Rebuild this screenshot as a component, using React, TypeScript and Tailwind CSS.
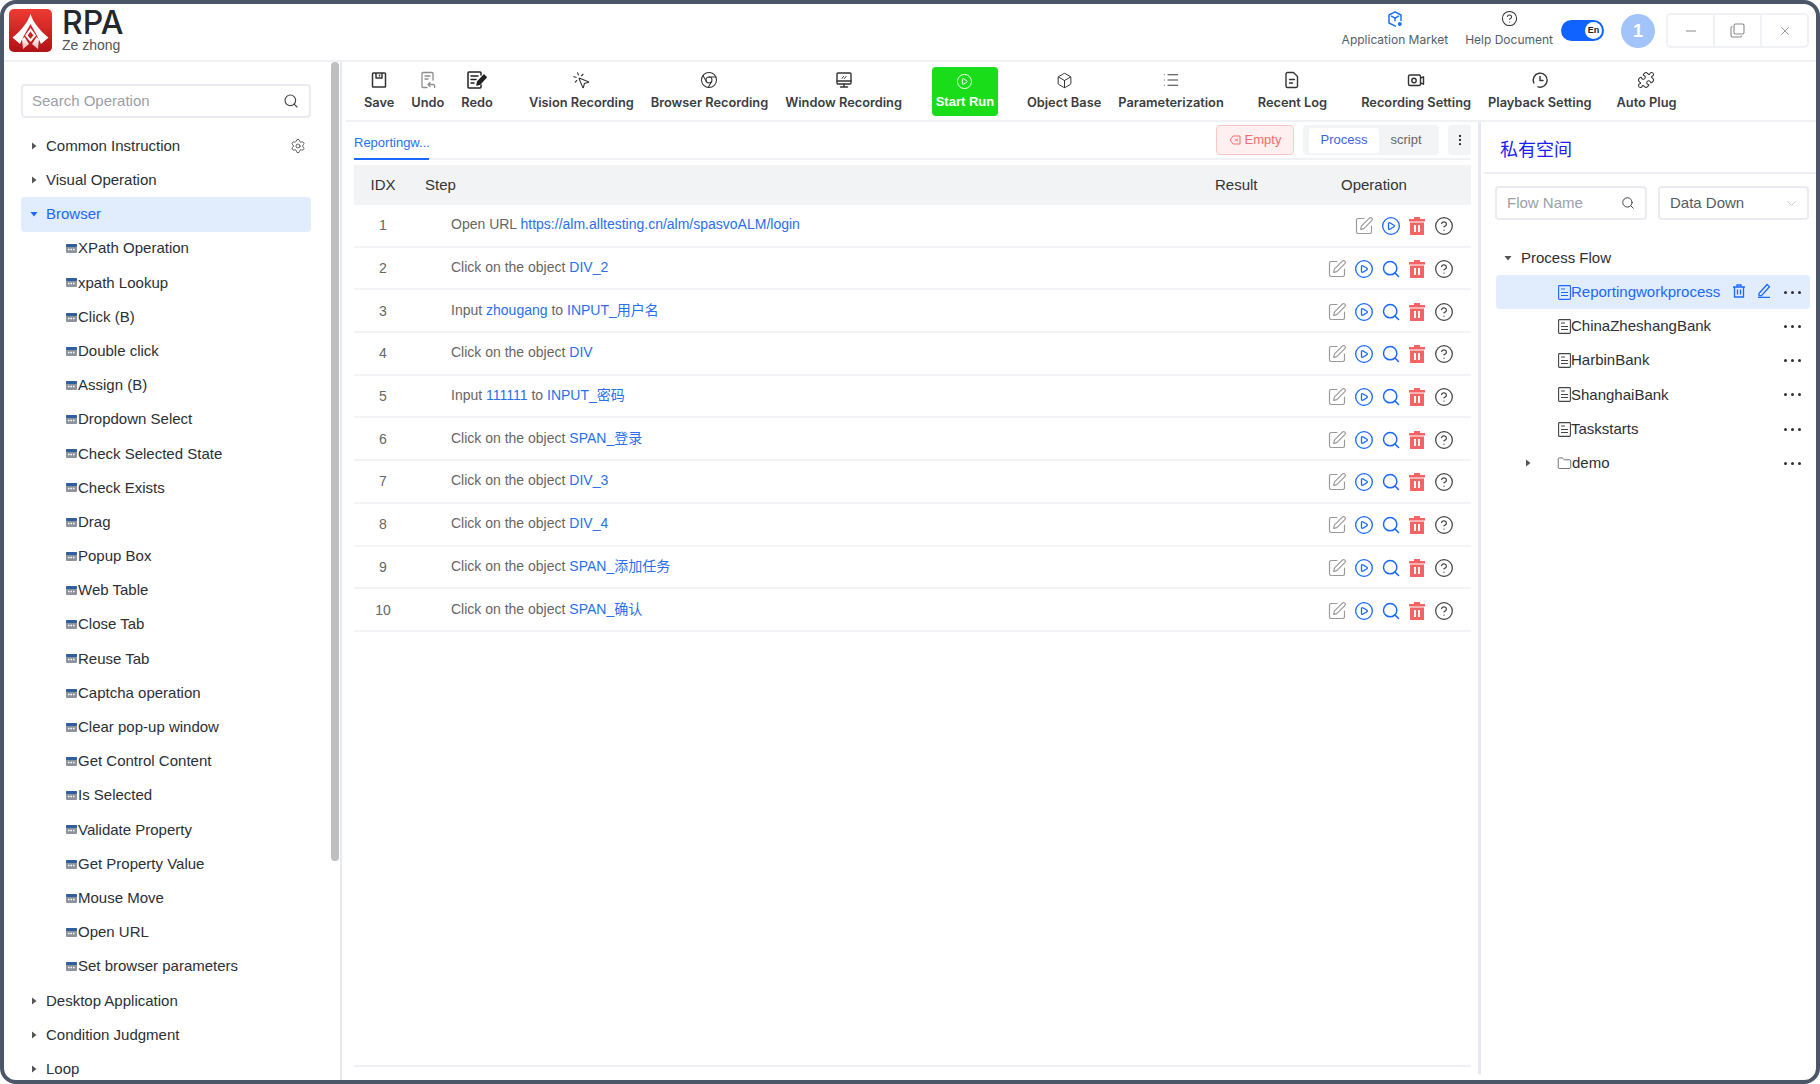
import { Box, ChevronDown, Chrome, CirclePlay, CircleHelp, EllipsisVertical, Folder, List, Minus, MousePointerClick, Puzzle, Search, Settings, SquarePen, X } from 'lucide-react';

const browserItems = [
  'XPath Operation', 'xpath Lookup', 'Click (B)', 'Double click', 'Assign (B)', 'Dropdown Select', 'Check Selected State',
  'Check Exists', 'Drag', 'Popup Box', 'Web Table', 'Close Tab', 'Reuse Tab', 'Captcha operation', 'Clear pop-up window',
  'Get Control Content', 'Is Selected', 'Validate Property', 'Get Property Value', 'Mouse Move', 'Open URL', 'Set browser parameters',
];

const steps: { pre: string; link: string; mid?: string; link2?: string }[] = [
  { pre: 'Open URL', link: 'https://alm.alltesting.cn/alm/spasvoALM/login' },
  { pre: 'Click on the object', link: 'DIV_2' },
  { pre: 'Input', link: 'zhougang', mid: 'to', link2: 'INPUT_用户名' },
  { pre: 'Click on the object', link: 'DIV' },
  { pre: 'Input', link: '111111', mid: 'to', link2: 'INPUT_密码' },
  { pre: 'Click on the object', link: 'SPAN_登录' },
  { pre: 'Click on the object', link: 'DIV_3' },
  { pre: 'Click on the object', link: 'DIV_4' },
  { pre: 'Click on the object', link: 'SPAN_添加任务' },
  { pre: 'Click on the object', link: 'SPAN_确认' },
];

const flows = ['ChinaZheshangBank', 'HarbinBank', 'ShanghaiBank', 'Taskstarts'];

function Logo() {
  return (
    <svg width="43" height="43" viewBox="0 0 43 43" className="shrink-0">
      <defs>
        <linearGradient id="logoBg" x1="0" y1="0" x2="0" y2="1">
          <stop offset="0" stopColor="#ee3b32" />
          <stop offset="1" stopColor="#b01218" />
        </linearGradient>
        <linearGradient id="logoLeg" x1="0" y1="0" x2="0" y2="1">
          <stop offset="0" stopColor="#ffffff" />
          <stop offset="1" stopColor="#f3b5b0" />
        </linearGradient>
      </defs>
      <rect width="43" height="43" rx="5" fill="url(#logoBg)" />
      <path d="M21.5 5C19 13 12 22 3.5 28.5L11 35C14 28 18 21 21.5 15C25 21 29 28 32 35L39.5 28.5C31 22 24 13 21.5 5Z" fill="#fff" />
      <path d="M21.5 19L27 26.5L21.5 33L16 26.5Z" fill="#fff" />
      <path d="M21.5 22.5L24.4 26.5L21.5 29.8L18.6 26.5Z" fill="#c9201f" />
      <path d="M13 30L15.5 28L20 35L14 40Z" fill="url(#logoLeg)" />
      <path d="M30 30L27.5 28L23 35L29 40Z" fill="url(#logoLeg)" />
    </svg>
  );
}

function SaveIcon() {
  return (
    <svg width="20" height="20" viewBox="0 0 20 20" fill="none" stroke="#333" strokeWidth="1.5" strokeLinejoin="round">
      <path d="M4.500 3h11a1 1 0 0 1 1 1v12.500a.5.5 0 0 1-.5.5H4a.5.5 0 0 1-.5-.5V4a1 1 0 0 1 1-1Z" />
      <path d="M7 3v5h6V3" />
      <path d="M10.500 4.500v2" />
    </svg>
  );
}

function UndoIcon() {
  return (
    <svg width="20" height="20" viewBox="0 0 20 20" fill="none" stroke="#8c8c8c" strokeWidth="1.3" strokeLinecap="round" strokeLinejoin="round">
      <path d="M9 17.500H5a1 1 0 0 1-1-1v-13a1 1 0 0 1 1-1h9a1 1 0 0 1 1 1V10" />
      <path d="M7 6h5M7 9h3" />
      <path d="M12 12.500l-2 2 2 2M10 14.500h5a2 2 0 0 1 1.500 3" />
    </svg>
  );
}

function RedoIcon() {
  return (
    <svg width="22" height="20" viewBox="0 0 22 20" fill="none" stroke="#222" strokeWidth="1.5" strokeLinecap="round" strokeLinejoin="round">
      <path d="M15 5V3a1 1 0 0 0-1-1H3a1 1 0 0 0-1 1v14a1 1 0 0 0 1 1h11a1 1 0 0 0 1-1v-2" />
      <path d="M5 6h7M5 9.500h5M5 13h3" />
      <path d="M11 15l.7-3.200L18 5l2.200 2.200-6.200 6.800Z" fill="#222" />
    </svg>
  );
}

function WindowRecIcon() {
  return (
    <svg width="20" height="20" viewBox="0 0 20 20" fill="none" stroke="#333" strokeWidth="1.4" strokeLinejoin="round" strokeLinecap="round">
      <rect x="3" y="3" width="14" height="11" rx="1" />
      <path d="M3 11h14M10 14v3M6.500 17h7" />
      <path d="M8 8.500l1.500-2M10.500 8.500l1.500-2" strokeWidth="1" />
    </svg>
  );
}

function LogIcon() {
  return (
    <svg width="20" height="20" viewBox="0 0 20 20" fill="none" stroke="#333" strokeWidth="1.4" strokeLinejoin="round" strokeLinecap="round">
      <path d="M5.500 2.500h6l4 4V16a1.500 1.500 0 0 1-1.500 1.500H5.500A1.500 1.500 0 0 1 4 16V4a1.500 1.500 0 0 1 1.500-1.500Z" />
      <path d="M7.500 9.500h5M7.500 13h3" />
    </svg>
  );
}

function VideoIcon() {
  return (
    <svg width="20" height="20" viewBox="0 0 20 20" fill="none" stroke="#333" strokeWidth="1.4" strokeLinejoin="round">
      <rect x="2.500" y="5" width="12" height="10.500" rx="1.500" />
      <circle cx="8" cy="10.500" r="2.200" />
      <path d="M14.500 8l3-1.200v7.400l-3-1.200" />
    </svg>
  );
}

function PlaybackIcon() {
  return (
    <svg width="20" height="20" viewBox="0 0 20 20" fill="none" stroke="#333" strokeWidth="1.4" strokeLinecap="round" strokeLinejoin="round">
      <path d="M3.800 13A7 7 0 1 1 8 16.800" />
      <path d="M10 6.500V10.500H13" />
    </svg>
  );
}

function MarketIcon() {
  return (
    <svg width="18" height="18" viewBox="0 0 18 18" fill="none" stroke="#1f6fff" strokeWidth="1.500" strokeLinejoin="round" strokeLinecap="round">
      <path d="M9 1.800l6 3.200v5.500M9.500 16.200L3 13V5l6-3.200" />
      <path d="M5.500 6.200L9 8.200l3.500-2" />
      <path d="M9 8.200v2.500" />
      <circle cx="13.800" cy="14" r="2" fill="#1f6fff" stroke="none" />
    </svg>
  );
}

function TrashIcon() {
  return (
    <svg width="18" height="20" viewBox="0 0 18 20">
      <path fill="#f56464" fillRule="evenodd" d="M6 1h6v2h5v2.500H1V3h5V1Zm-4 5.500h14V19H2V6.500Zm4 2.500v7h2V9H6Zm4 0v7h2V9h-2Z" />
    </svg>
  );
}

function DocIcon({ color }: { color: string }) {
  return (
    <svg width="13" height="15" viewBox="0 0 13 15" fill="none" stroke={color} strokeWidth="1.100" className="shrink-0">
      <rect x="0.600" y="0.600" width="11.800" height="13.800" rx="0.800" />
      <path d="M3 4h4M3 7.500h7M3 10.500h7" />
    </svg>
  );
}

function CmdIcon() {
  return (
    <svg width="11" height="9" viewBox="0 0 11 9" className="shrink-0">
      <rect width="11" height="9" rx="1" fill="#8d939c" />
      <rect width="11" height="3" rx="1" fill="#2f5f9e" />
      <path d="M2 5.500h7" stroke="#fff" strokeWidth="1.500" strokeDasharray="1.500 1" />
    </svg>
  );
}

function Caret({ open, color = '#555' }: { open?: boolean; color?: string }) {
  return (
    <svg width="8" height="8" viewBox="0 0 8 8" className="shrink-0">
      <path d={open ? 'M0.500 2h7L4 6.500Z' : 'M2 0.500v7L6.500 4Z'} fill={color} />
    </svg>
  );
}

function Dots() {
  return (
    <span className="ml-auto w-[17px] flex justify-between">
      <i className="w-[3px] h-[3px] rounded-full bg-[#2b2f36]" />
      <i className="w-[3px] h-[3px] rounded-full bg-[#2b2f36]" />
      <i className="w-[3px] h-[3px] rounded-full bg-[#2b2f36]" />
    </span>
  );
}

function ToolItem({ label, icon, className }: { label: string; icon: React.ReactNode; className: string }) {
  return (
    <div className={`flex flex-col items-center whitespace-nowrap ${className}`}>
      <div className="h-[20px] flex items-center justify-center">{icon}</div>
      <span className="mt-[5px] text-[12.8px] leading-[16px] font-semibold text-[#3a3d42] font-['Inter',sans-serif]">{label}</span>
    </div>
  );
}

function SideGroup({ label }: { label: string }) {
  return (
    <div className="h-[34.2px] flex items-center pl-[9px]">
      <Caret />
      <span className="ml-[8px]">{label}</span>
    </div>
  );
}

export default function App() {
  return (
    <div className="w-[1820px] h-[1084px] bg-white font-['Liberation_Sans','Noto_Sans_CJK_SC',sans-serif]">
      <div className="w-full h-full flex flex-col border-4 border-[#4b5768] rounded-[16px] overflow-hidden bg-white">
        {/* title bar */}
        <div className="h-[58px] shrink-0 flex items-start border-b-2 border-[#eff1f5] pl-[5px] pr-[7px]">
          <div className="mt-[5px]"><Logo /></div>
          <div className="ml-[10px] mt-[6px] flex flex-col">
            <span className="text-[32px] leading-[26px] font-medium text-[#24272e] font-['Inter',sans-serif]">RPA</span>
            <span className="text-[14px] leading-[16px] mt-[1px] text-[#555]">Ze zhong</span>
          </div>
          <div className="ml-auto flex items-start">
            <div className="flex flex-col items-center mt-[6px]">
              <MarketIcon />
              <span className="mt-[4px] text-[12px] leading-[16px] text-[#555e68] font-['Inter',sans-serif]">Application Market</span>
            </div>
            <div className="flex flex-col items-center mt-[6px] ml-[17px]">
              <CircleHelp size={17} strokeWidth={1.5} color="#333" />
              <span className="mt-[5px] text-[12px] leading-[16px] text-[#555e68] font-['Inter',sans-serif]">Help Document</span>
            </div>
            <div className="ml-[8px] mt-[16px] w-[43px] h-[21px] rounded-full bg-[#1163ff] flex items-center justify-end pr-[2px]">
              <span className="w-[17px] h-[17px] rounded-full bg-white flex items-center justify-center text-[9px] font-bold text-[#222]">En</span>
            </div>
            <div className="ml-[17px] mt-[10px] w-[34px] h-[34px] rounded-full bg-[#a3c4fa] flex items-center justify-center text-white text-[18px] font-bold">1</div>
            <div className="ml-[11px] mt-[9px] w-[143px] h-[35px] flex border-2 border-[#f0f1f4] rounded-[5px]">
              <div className="flex-1 flex items-center justify-center"><Minus size={16} strokeWidth={1.3} color="#777" /></div>
              <div className="flex-1 flex items-center justify-center border-x-2 border-[#f0f1f4]">
                <svg width="15" height="15" viewBox="0 0 15 15" fill="none" stroke="#888" strokeWidth="1.100"><rect x="4" y="1" width="10" height="10" rx="1.500" /><path d="M2.500 3.500A1.500 1.500 0 0 0 1 5v7.500A1.500 1.500 0 0 0 2.500 14H10a1.500 1.500 0 0 0 1.500-1.500" /></svg>
              </div>
              <div className="flex-1 flex items-center justify-center"><X size={14} strokeWidth={1.3} color="#777" /></div>
            </div>
          </div>
        </div>

        <div className="flex-1 min-h-0 flex">
          {/* operation tree */}
          <div className="relative w-[338px] shrink-0 overflow-hidden border-r-2 border-[#e6e9f1] text-[15px] text-[#2b2f36]">
            <div className="absolute right-[1px] top-0 w-[8px] h-[799px] rounded-[4px] bg-[#bfbfbf]" />
            <div className="ml-[17px] w-[290px]">
              <div className="mt-[22px] h-[34px] border-2 border-[#eaecf1] rounded-[4px] flex items-center justify-between pl-[9px] pr-[10px] text-[#9aa0a8]">
                <span className="text-[15px]">Search Operation</span>
                <Search size={16} strokeWidth={1.7} color="#444" />
              </div>
              <div className="mt-[11px]">
                <div className="h-[34.2px] flex items-center pl-[9px]">
                  <Caret />
                  <span className="ml-[8px]">Common Instruction</span>
                  <Settings size={16} strokeWidth={1.4} color="#555" className="ml-auto mr-[5px]" />
                </div>
                <SideGroup label="Visual Operation" />
                <div className="h-[34.2px] flex items-center pl-[9px] rounded-[4px] bg-[#e1ecfd] text-[#1c68ff]">
                  <Caret open color="#1c68ff" />
                  <span className="ml-[8px]">Browser</span>
                </div>
                {browserItems.map((name) => (
                  <div key={name} className="h-[34.2px] flex items-center pl-[45px]">
                    <CmdIcon />
                    <span className="ml-[1px]">{name}</span>
                  </div>
                ))}
                <SideGroup label="Desktop Application" />
                <SideGroup label="Condition Judgment" />
                <SideGroup label="Loop" />
              </div>
            </div>
          </div>

          <div className="flex-1 min-w-0 flex flex-col">
            {/* toolbar */}
            <div className="h-[60px] shrink-0 ml-[4px] border-b-2 border-[#eff1f5] flex items-start pt-[8px] pl-[18px]">
              <ToolItem label="Save" icon={<SaveIcon />} className="" />
              <ToolItem label="Undo" icon={<UndoIcon />} className="ml-[17px]" />
              <ToolItem label="Redo" icon={<RedoIcon />} className="ml-[17px]" />
              <ToolItem label="Vision Recording" icon={<MousePointerClick size={19} strokeWidth={1.4} color="#333" />} className="ml-[36px]" />
              <ToolItem label="Browser Recording" icon={<Chrome size={18} strokeWidth={1.4} color="#333" />} className="ml-[17px]" />
              <ToolItem label="Window Recording" icon={<WindowRecIcon />} className="ml-[17px]" />
              <div className="ml-[30px] -mt-[3px] w-[66px] h-[49px] rounded-[4px] bg-[#18dd18] flex flex-col items-center justify-center text-white">
                <CirclePlay size={17} strokeWidth={1.4} />
                <span className="mt-[4px] text-[13px] leading-[16px] font-bold">Start Run</span>
              </div>
              <ToolItem label="Object Base" icon={<Box size={17} strokeWidth={1.4} color="#333" />} className="ml-[29px]" />
              <ToolItem label="Parameterization" icon={<List size={18} strokeWidth={1.3} color="#333" />} className="ml-[17px]" />
              <ToolItem label="Recent Log" icon={<LogIcon />} className="ml-[34px]" />
              <ToolItem label="Recording Setting" icon={<VideoIcon />} className="ml-[34px]" />
              <ToolItem label="Playback Setting" icon={<PlaybackIcon />} className="ml-[17px]" />
              <ToolItem label="Auto Plug" icon={<Puzzle size={18} strokeWidth={1.4} color="#333" />} className="ml-[25px]" />
            </div>

            <div className="flex-1 min-h-0 flex">
              {/* flow editor */}
              <div className="w-[1136px] shrink-0 pl-[12px] pr-[7px] flex flex-col pb-[13px]">
                <div className="h-[38px] shrink-0 flex border-b-2 border-[#eff1f5]">
                  <div className="w-[75px] h-[38px] border-b-[2px] border-[#1c68ff] text-[13px] text-[#2a6ff0] flex items-center pt-[6px]">Reportingw...</div>
                  <div className="ml-auto mt-[3px] w-[78px] h-[30px] flex items-center justify-center gap-[4px] rounded-[4px] border border-[#fbc8c8] bg-[#fef0f0] text-[13px] text-[#f56c6c]">
                    <svg width="12" height="10" viewBox="0 0 12 10" fill="none" stroke="#f56c6c" strokeWidth="1"><path d="M4 1h7v8H4L1 5Z" /><path d="M6 3.500l3 3M9 3.500l-3 3" /></svg>
                    Empty
                  </div>
                  <div className="ml-[9px] mt-[3px] w-[136px] h-[30px] rounded-[4px] bg-[#f3f4f6] flex items-center pl-[6px] text-[13px]">
                    <span className="w-[70px] h-[25px] rounded-[3px] bg-white text-[#3d63e0] flex items-center justify-center">Process</span>
                    <span className="w-[54px] text-center text-[#666]">script</span>
                  </div>
                  <div className="ml-[9px] mt-[3px] w-[23px] h-[30px] rounded-[3px] bg-[#f3f4f6] flex items-center justify-center">
                    <EllipsisVertical size={14} strokeWidth={2} color="#333" />
                  </div>
                </div>
                <div className="mt-[5px] h-[40px] shrink-0 bg-[#f2f3f5] flex items-center text-[15px] text-[#333]">
                  <span className="w-[58px] text-center">IDX</span>
                  <span className="ml-[13px] w-[790px]">Step</span>
                  <span className="w-[126px]">Result</span>
                  <span>Operation</span>
                </div>
                {steps.map((s, i) => (
                  <div key={i} className="h-[42.7px] shrink-0 flex items-center border-b-2 border-[#f3f4f8] text-[14px] text-[#666]">
                    <span className="w-[58px] text-center mt-[1px]">{i + 1}</span>
                    <span className="ml-[39px] -mt-[1px]">
                      {s.pre} <span className="text-[#2a6ff0]">{s.link}</span>
                      {s.mid ? <> {s.mid} <span className="text-[#2a6ff0]">{s.link2}</span></> : null}
                    </span>
                    <div className="ml-auto mr-[18px] mt-[2px] flex items-center gap-[7px]">
                      <SquarePen size={20} strokeWidth={1.4} color="#999" />
                      <CirclePlay size={20} strokeWidth={1.6} color="#1c68ff" />
                      {i > 0 ? <Search size={20} strokeWidth={1.8} color="#1c68ff" /> : null}
                      <TrashIcon />
                      <CircleHelp size={20} strokeWidth={1.5} color="#444" className="-mr-[1px] ml-[1px]" />
                    </div>
                  </div>
                ))}
                <div className="mt-auto h-[2px] shrink-0 bg-[#eef0f5]" />
              </div>
              <div className="w-[3px] shrink-0 bg-[#e6e9f1] mb-[6px]" />

              {/* process flow panel */}
              <div className="flex-1 min-w-0 flex flex-col text-[15px] text-[#2b2f36]">
                <div className="h-[52px] shrink-0 border-b-2 border-[#eceef4] ml-[3px] pl-[16px] pt-[6px] flex items-center text-[18px] text-[#1b1bf5]">私有空间</div>
                <div className="mt-[12px] ml-[14px] mr-[7px] flex gap-[11px] text-[#555b63]">
                  <div className="w-[152px] h-[34px] border-2 border-[#eaecf1] rounded-[4px] flex items-center justify-between px-[10px] text-[#9aa0a8]">
                    <span>Flow Name</span>
                    <Search size={14} strokeWidth={1.7} color="#444" />
                  </div>
                  <div className="flex-1 h-[34px] border-2 border-[#eaecf1] rounded-[4px] flex items-center justify-between pl-[10px] pr-[8px]">
                    <span>Data Down</span>
                    <ChevronDown size={15} strokeWidth={1.1} color="#aaa" />
                  </div>
                </div>
                <div className="mt-[21px] ml-[15px] mr-[6px]">
                  <div className="h-[34.2px] flex items-center pl-[8px]">
                    <Caret open />
                    <span className="ml-[9px]">Process Flow</span>
                  </div>
                  <div className="h-[34.2px] flex items-center pl-[62px] pr-[9px] rounded-[4px] bg-[#e1ecfd] text-[#1c68ff]">
                    <DocIcon color="#1c68ff" />
                    <span>Reportingworkprocess</span>
                    <svg width="14" height="14" viewBox="0 0 14 14" fill="none" stroke="#1c68ff" strokeWidth="1.300" className="ml-[12px] -mt-[3px]"><path d="M1 3h12M5 3V1h4v2M2.500 3v10h9V3M5.500 5.500v5M8.500 5.500v5" /></svg>
                    <svg width="14" height="15" viewBox="0 0 14 15" fill="none" stroke="#1c68ff" strokeWidth="1.300" className="ml-[11px] -mt-[3px]"><path d="M2 10.500L10 1.500l2.500 2.200-8 9H2ZM1 14.300h12" /></svg>
                    <Dots />
                  </div>
                  {flows.map((name) => (
                    <div key={name} className="h-[34.2px] flex items-center pl-[62px] pr-[9px]">
                      <DocIcon color="#444" />
                      <span>{name}</span>
                      <Dots />
                    </div>
                  ))}
                  <div className="h-[34.2px] flex items-center pl-[28px] pr-[9px]">
                    <Caret />
                    <Folder size={15} strokeWidth={1.2} color="#444" className="ml-[25px]" />
                    <span>demo</span>
                    <Dots />
                  </div>
                </div>
              </div>
            </div>
          </div>
        </div>
      </div>
    </div>
  );
}
